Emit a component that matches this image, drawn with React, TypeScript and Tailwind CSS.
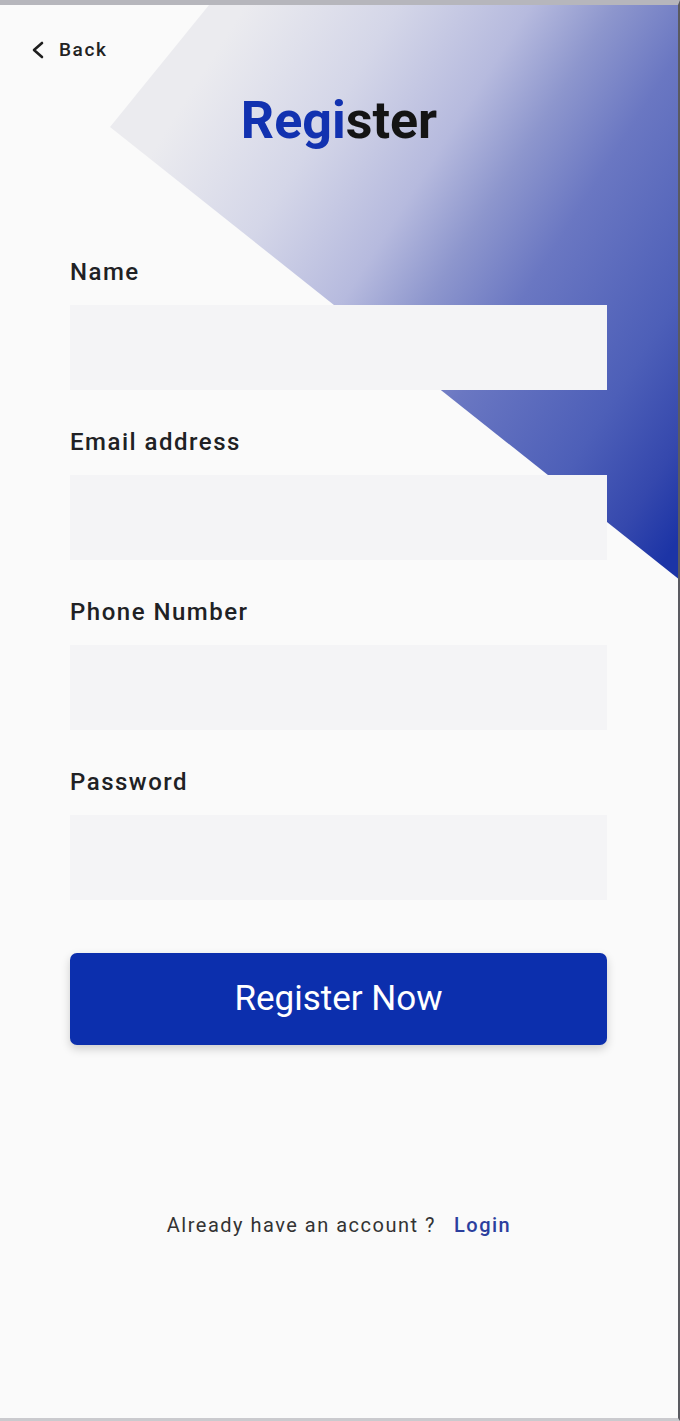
import React from 'react';

const fields = ['Name', 'Email address', 'Phone Number', 'Password'];

const Backdrop: React.FC = () => (
  <svg
    className="absolute inset-0 pointer-events-none"
    width="680"
    height="1421"
    viewBox="0 0 680 1421"
  >
    <defs>
      <linearGradient id="shade" gradientUnits="userSpaceOnUse" x1="150" y1="150" x2="700" y2="500">
        <stop offset="0" stopColor="#ebebef" />
        <stop offset="0.2" stopColor="#d4d6e8" />
        <stop offset="0.37" stopColor="#b6bade" />
        <stop offset="0.48" stopColor="#8d96cd" />
        <stop offset="0.6" stopColor="#6a77c2" />
        <stop offset="0.8" stopColor="#4d5fb8" />
        <stop offset="0.92" stopColor="#3548ad" />
        <stop offset="1" stopColor="#1c34a6" />
      </linearGradient>
    </defs>
    <polygon points="209,0 680,0 680,575 110,122" fill="url(#shade)" />
  </svg>
);

const Field: React.FC<{ label: string; last?: boolean }> = ({ label, last }) => (
  <div className={last ? '' : 'mb-[38px]'}>
    <label className="block text-[24px] leading-[28px] font-medium tracking-[1.5px] text-[#202124] mb-[19px]">
      {label}
    </label>
    <input
      type={label === 'Password' ? 'password' : 'text'}
      className="block w-full h-[85px] bg-[#f4f4f6] outline-none px-4"
    />
  </div>
);

export default function App() {
  return (
    <div
      className="relative w-[680px] h-[1421px] overflow-hidden bg-[#fafafa] border-t-[5px] border-t-[#b6b6bc] border-r-[2px] border-r-[#5a5a60] border-b-[3px] border-b-[#cacace]"
      style={{ fontFamily: 'Roboto, "Noto Sans", sans-serif' }}
    >
      <Backdrop />
      <div className="relative">
        <div className="flex items-center h-6 mt-[33px] ml-[31px] gap-[14px] text-[#222]">
          <svg width="14" height="18" viewBox="0 0 14 18" fill="none">
            <polyline points="11,2 3,9 11,16" stroke="#1e1e1e" strokeWidth="2.6" strokeLinecap="round" strokeLinejoin="round" />
          </svg>
          <span className="text-[19px] font-medium tracking-[1.6px]">Back</span>
        </div>

        <h1 className="mt-[28px] h-[62px] leading-[62px] text-center text-[52px] font-bold">
          <span className="text-[#1232b0]">Regi</span>
          <span className="text-[#141414]">ster</span>
        </h1>

        <form className="pl-[70px] mt-[106px] pr-[71px]" onSubmit={(e) => e.preventDefault()}>
          {fields.map((f, i) => (
            <Field key={f} label={f} last={i === fields.length - 1} />
          ))}
          <button
            type="submit"
            className="mt-[53px] w-full h-[92px] rounded-[7px] bg-[#0c2fad] text-white text-[35px] shadow-[0_4px_10px_rgba(0,0,0,0.18)]"
          >
            Register Now
          </button>
        </form>

        <p className="mt-[166px] leading-[28px] text-center text-[20px] tracking-[1.5px] text-[#333]">
          Already have an account ?
          <a href="#" className="ml-[18px] text-[#2b3f9e] font-medium">Login</a>
        </p>
      </div>
    </div>
  );
}
